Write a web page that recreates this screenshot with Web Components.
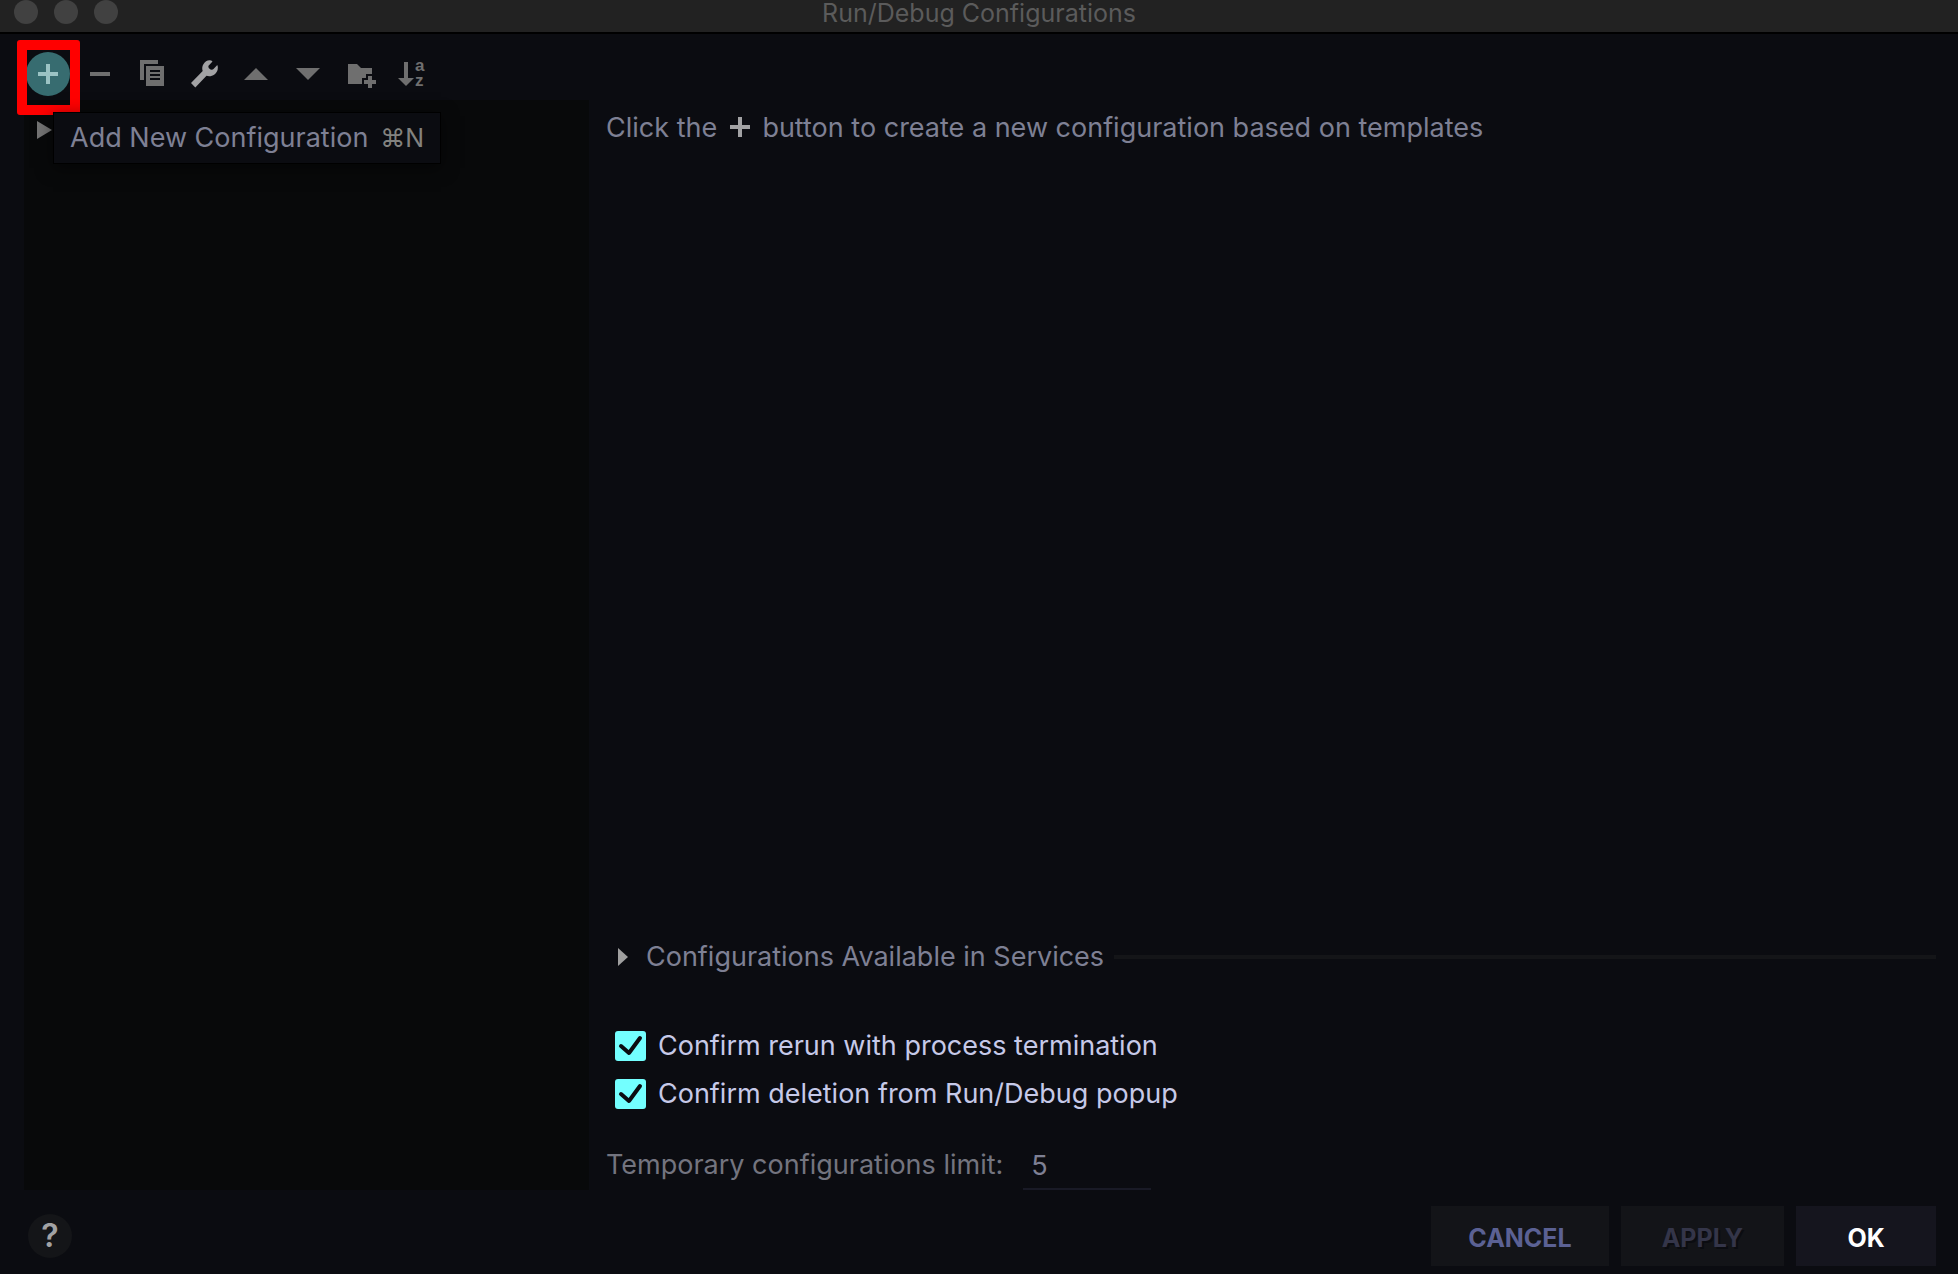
<!DOCTYPE html>
<html lang="en">
<head>
<meta charset="utf-8">
<title>Run/Debug Configurations</title>
<style>
  html, body {
    margin: 0;
    background: #0b0c11;
  }

  body {
    font-family: Inter, "Liberation Sans", sans-serif;
    font-size: 27px;
    line-height: 32px;
    color: #7e8094;
  }
</style>
</head>
<body>
<run-dialog></run-dialog>

<script>
class TitleBar extends HTMLElement {

  constructor () {
    super()
    this.shadow = this.attachShadow({ mode: 'open' })
  }

  connectedCallback () {
    this.render()
  }

  render () {
    this.shadow.innerHTML =
    /*html*/`
    <style>
      :host{
        display: grid;
        grid-template-columns: 1fr auto 1fr;
        height: 32px;
        border-bottom: 2px solid #000;
        background: #222222;
        color: #5b5b5b;
      }

      .lights{
        display: flex;
        gap: 16px;
        padding-left: 14px;
      }

      .lights span{
        width: 24px;
        height: 24px;
        border-radius: 50%;
        background: #414141;
      }

      h1{
        margin: 0;
        font-size: 25px;
        line-height: 26px;
        font-weight: 400;
      }
    </style>

    <div class="lights"><span></span><span></span><span></span></div>
    <h1><slot></slot></h1>
    `
  }
}

customElements.define('title-bar', TitleBar);

class ToolButton extends HTMLElement {

  constructor () {
    super()
    this.shadow = this.attachShadow({ mode: 'open' })
    this.icons = {
      add: '<path d="M14 6h4v8h8v4h-8v8h-4v-8H6v-4h8z"/>',
      remove: '<path d="M6 14h20v4H6z"/>',
      copy: '<path d="M4 2h18v4H8v16H4z"/><path fill-rule="evenodd" d="M10 8h18v20H10zM14 12v2h10v-2zM14 16v2h10v-2zM14 20v2h10v-2z"/>',
      edit: '<path d="M3 25L14.700 13C13 8 16.500 2.500 21.500 2.200Q23.500 2.200 24.500 3.500L20.300 8Q20 10.500 22.500 11.500Q24.500 12 25.500 11L29.300 7Q30.300 9 29.700 11.500C28.500 16.500 23 19.500 18.500 17.800L7.300 29.500Z"/>',
      up: '<path d="M4 22L16 10L28 22z"/>',
      down: '<path d="M4 10h24L16 22z"/>',
      folder: '<path d="M4 6h9l4 4h11v6h-6v4h-4v6H4z"/><path d="M24 18h4v4h4v4h-4v4h-4v-4h-4v-4h4z"/>',
      sort: '<path d="M8 4h4v16h6l-8 8-8-8h6z"/><text x="19" y="13" font-size="17">a</text><text x="19" y="28" font-size="17">z</text>'
    }
  }

  connectedCallback () {
    this.render()
  }

  render () {
    this.shadow.innerHTML =
    /*html*/`
    <style>
      :host{
        display: block;
        color: #6f6f6f;
      }

      :host([name="edit"]){
        color: #a2a2a4;
      }

      :host([active]){
        color: #9bc3c4;
      }

      button{
        display: grid;
        place-items: center;
        width: 44px;
        height: 44px;
        padding: 0;
        border: 0;
        border-radius: 50%;
        background: none;
        color: inherit;
      }

      :host([active]) button{
        background: #376c70;
      }

      svg{
        width: 32px;
        height: 32px;
        fill: currentColor;
        overflow: visible;
        font-family: "Liberation Sans", sans-serif;
        font-weight: 700;
      }
    </style>

    <button type="button" aria-label="${this.getAttribute('label')}">
      <svg viewBox="0 0 32 32">${this.icons[this.getAttribute('name')]}</svg>
    </button>
    `
  }
}

customElements.define('tool-button', ToolButton);

class HintPopup extends HTMLElement {

  constructor () {
    super()
    this.shadow = this.attachShadow({ mode: 'open' })
  }

  connectedCallback () {
    this.render()
  }

  render () {
    this.shadow.innerHTML =
    /*html*/`
    <style>
      :host{
        display: flex;
        align-items: baseline;
        gap: 12px;
        padding: 9px 16px;
        border: 1px solid #000;
        background: #0b0c11;
        box-shadow: 0 4px 16px rgba(0, 0, 0, 0.5);
        white-space: nowrap;
      }

      kbd{
        font: inherit;
        font-size: 25px;
        color: #82827f;
      }
    </style>

    <span><slot></slot></span>
    <kbd><slot name="shortcut"></slot></kbd>
    `
  }
}

customElements.define('hint-popup', HintPopup);

class ConfigToolbar extends HTMLElement {

  constructor () {
    super()
    this.shadow = this.attachShadow({ mode: 'open' })
  }

  connectedCallback () {
    this.render()
  }

  render () {
    this.shadow.innerHTML =
    /*html*/`
    <style>
      :host{
        display: flex;
        gap: 8px;
        padding: 18px 26px 4px;
      }

      .highlighted{
        position: relative;
      }

      /* marker frame drawn over the add button */
      .highlighted::after{
        content: "";
        position: absolute;
        top: -12px;
        left: -9px;
        width: 43px;
        height: 55px;
        border: 10px solid #ff0000;
        border-radius: 3px;
        pointer-events: none;
      }

      hint-popup{
        position: absolute;
        z-index: 1;
        top: 60px;
        left: 27px;
      }
    </style>

    <div class="highlighted">
      <tool-button name="add" label="Add New Configuration" active></tool-button>
      <hint-popup>Add New Configuration<span slot="shortcut">⌘N</span></hint-popup>
    </div>
    <tool-button name="remove" label="Remove Configuration"></tool-button>
    <tool-button name="copy" label="Copy Configuration"></tool-button>
    <tool-button name="edit" label="Edit Templates"></tool-button>
    <tool-button name="up" label="Move Up"></tool-button>
    <tool-button name="down" label="Move Down"></tool-button>
    <tool-button name="folder" label="Create New Folder"></tool-button>
    <tool-button name="sort" label="Sort Configurations"></tool-button>
    `
  }
}

customElements.define('config-toolbar', ConfigToolbar);

class ConfigTree extends HTMLElement {

  constructor () {
    super()
    this.shadow = this.attachShadow({ mode: 'open' })
  }

  connectedCallback () {
    this.render()
  }

  render () {
    this.shadow.innerHTML =
    /*html*/`
    <style>
      :host{
        display: block;
        box-sizing: border-box;
        padding: 20px 12px;
        background: #08090a;
      }

      button{
        display: block;
        padding: 0;
        border: 0;
        background: none;
      }

      svg{
        display: block;
        width: 16px;
        height: 20px;
        fill: #747474;
      }
    </style>

    <button type="button" aria-label="Expand">
      <svg viewBox="0 0 16 20"><path d="M1 1L16 10L1 19z"/></svg>
    </button>
    `
  }
}

customElements.define('config-tree', ConfigTree);

class SectionToggle extends HTMLElement {

  constructor () {
    super()
    this.shadow = this.attachShadow({ mode: 'open' })
  }

  connectedCallback () {
    this.render()
  }

  render () {
    this.shadow.innerHTML =
    /*html*/`
    <style>
      :host{
        display: flex;
        align-items: center;
        gap: 10px;
      }

      button{
        display: flex;
        align-items: center;
        gap: 18px;
        padding: 0 0 0 12px;
        border: 0;
        background: none;
        color: inherit;
        font: inherit;
      }

      svg{
        width: 10px;
        height: 18px;
        fill: #a0a0a0;
      }

      .line{
        flex: 1;
        height: 4px;
        background: #141518;
      }
    </style>

    <button type="button" aria-expanded="false">
      <svg viewBox="0 0 10 18"><path d="M0 0L10 9L0 18z"/></svg>
      <slot></slot>
    </button>
    <div class="line"></div>
    `
  }
}

customElements.define('section-toggle', SectionToggle);

class CheckOption extends HTMLElement {

  constructor () {
    super()
    this.shadow = this.attachShadow({ mode: 'open' })
  }

  connectedCallback () {
    this.render()
  }

  render () {
    this.shadow.innerHTML =
    /*html*/`
    <style>
      :host{
        display: flex;
        color: #c6c9e8;
      }

      label{
        display: flex;
        align-items: center;
        gap: 12px;
        padding-left: 9px;
      }

      .box{
        display: grid;
      }

      .box > *{
        grid-area: 1 / 1;
      }

      input{
        appearance: none;
        width: 31px;
        height: 30px;
        margin: 0;
        border-radius: 3px;
        background: #73ffff;
      }

      svg{
        width: 31px;
        height: 30px;
        fill: none;
        stroke: #0b0c11;
        stroke-width: 4;
        stroke-linecap: round;
        stroke-linejoin: round;
        pointer-events: none;
      }

      input:not(:checked) + svg{
        display: none;
      }
    </style>

    <label>
      <span class="box">
        <input type="checkbox" checked>
        <svg viewBox="0 0 31 30"><path d="M6 15L14 22L25 7"/></svg>
      </span>
      <span><slot></slot></span>
    </label>
    `
  }
}

customElements.define('check-option', CheckOption);

class LimitField extends HTMLElement {

  constructor () {
    super()
    this.shadow = this.attachShadow({ mode: 'open' })
  }

  connectedCallback () {
    this.render()
  }

  render () {
    this.shadow.innerHTML =
    /*html*/`
    <style>
      :host{
        display: flex;
        align-items: center;
        gap: 20px;
        color: #73747f;
      }

      input{
        width: 128px;
        height: 50px;
        box-sizing: border-box;
        padding: 0 8px;
        border: 0;
        border-top: 2px solid transparent;
        border-bottom: 2px solid #191a26;
        background: none;
        color: #7e8094;
        font: inherit;
      }
    </style>

    <label for="limit"><slot></slot></label>
    <input id="limit" type="text" value="${this.getAttribute('value')}">
    `
  }
}

customElements.define('limit-field', LimitField);

class ConfigDetails extends HTMLElement {

  constructor () {
    super()
    this.shadow = this.attachShadow({ mode: 'open' })
  }

  connectedCallback () {
    this.render()
  }

  render () {
    this.shadow.innerHTML =
    /*html*/`
    <style>
      :host{
        display: flex;
        flex-direction: column;
        padding-top: 12px;
      }

      p{
        flex: 1;
        margin: 0;
      }

      p svg{
        width: 20px;
        height: 20px;
        margin: 0 5px;
        fill: #a2a2a4;
      }

      .options{
        display: flex;
        flex-direction: column;
        gap: 16px;
        padding: 57px 0 30px;
      }
    </style>

    <p>Click the <svg viewBox="0 0 20 20"><path d="M8 0h4v8h8v4h-8v8H8v-8H0V8h8z"/></svg> button to create a new configuration based on templates</p>
    <section-toggle>Configurations Available in Services</section-toggle>
    <div class="options">
      <check-option>Confirm rerun with process termination</check-option>
      <check-option>Confirm deletion from Run/Debug popup</check-option>
    </div>
    <limit-field value="5">Temporary configurations limit:</limit-field>
    `
  }
}

customElements.define('config-details', ConfigDetails);

class DialogButton extends HTMLElement {

  constructor () {
    super()
    this.shadow = this.attachShadow({ mode: 'open' })
  }

  connectedCallback () {
    this.render()
  }

  render () {
    this.shadow.innerHTML =
    /*html*/`
    <style>
      :host{
        display: block;
      }

      button{
        display: block;
        min-width: 140px;
        height: 60px;
        padding: 4px 37px 0;
        border: 0;
        background: #131418;
        color: #5b6194;
        font: inherit;
        font-size: 25px;
        font-weight: 700;
      }

      button:disabled{
        padding: 4px 41px 0;
        color: #343549;
        text-shadow: 2px 2px 0 #0b0c11;
      }

      :host([primary]) button{
        background: #15151e;
        color: #ffffff;
      }
    </style>

    <button type="button" ${this.hasAttribute('disabled') ? 'disabled' : ''}><slot></slot></button>
    `
  }
}

customElements.define('dialog-button', DialogButton);

class DialogFooter extends HTMLElement {

  constructor () {
    super()
    this.shadow = this.attachShadow({ mode: 'open' })
  }

  connectedCallback () {
    this.render()
  }

  render () {
    this.shadow.innerHTML =
    /*html*/`
    <style>
      :host{
        display: flex;
        align-items: center;
        gap: 12px;
        padding: 16px 22px 8px 28px;
      }

      .help{
        width: 44px;
        height: 44px;
        margin-right: auto;
        padding: 0;
        border: 0;
        border-radius: 50%;
        background: #141518;
        color: #a2a2a4;
        font: inherit;
        font-size: 32px;
        font-weight: 600;
      }
    </style>

    <button class="help" type="button" aria-label="Help">?</button>
    <dialog-button>CANCEL</dialog-button>
    <dialog-button disabled>APPLY</dialog-button>
    <dialog-button primary>OK</dialog-button>
    `
  }
}

customElements.define('dialog-footer', DialogFooter);

class RunDialog extends HTMLElement {

  constructor () {
    super()
    this.shadow = this.attachShadow({ mode: 'open' })
  }

  connectedCallback () {
    this.render()
  }

  render () {
    this.shadow.innerHTML =
    /*html*/`
    <style>
      :host{
        display: flex;
        flex-direction: column;
        min-height: 100vh;
      }

      main{
        flex: 1;
        display: flex;
        gap: 17px;
        padding: 0 22px 0 24px;
      }

      config-tree{
        flex: 0 0 565px;
      }

      config-details{
        flex: 1;
      }
    </style>

    <title-bar>Run/Debug Configurations</title-bar>
    <config-toolbar></config-toolbar>
    <main>
      <config-tree></config-tree>
      <config-details></config-details>
    </main>
    <dialog-footer></dialog-footer>
    `
  }
}

customElements.define('run-dialog', RunDialog);
</script>
</body>
</html>
